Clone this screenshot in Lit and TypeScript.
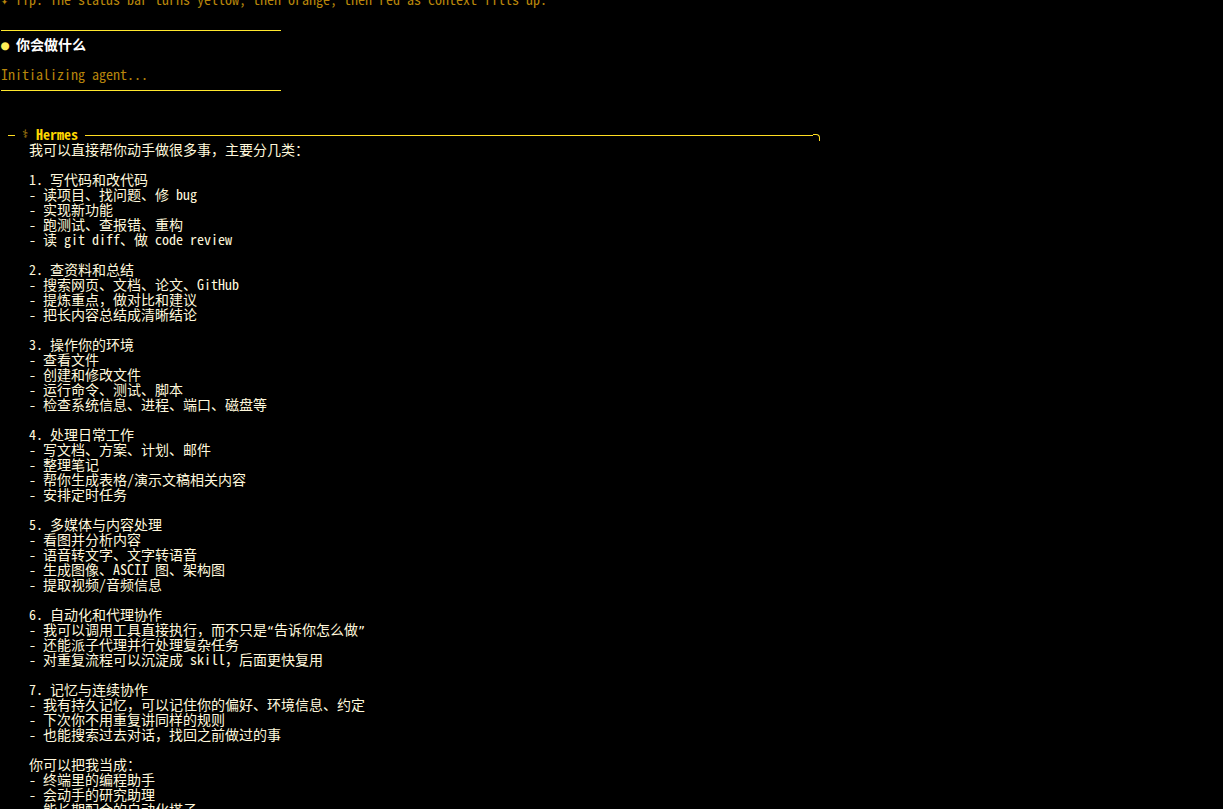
import { LitElement, html, css } from "lit";
import { customElement } from "lit/decorators.js";

const BODY = `我可以直接帮你动手做很多事，主要分几类：

1. 写代码和改代码
- 读项目、找问题、修 bug
- 实现新功能
- 跑测试、查报错、重构
- 读 git diff、做 code review

2. 查资料和总结
- 搜索网页、文档、论文、GitHub
- 提炼重点，做对比和建议
- 把长内容总结成清晰结论

3. 操作你的环境
- 查看文件
- 创建和修改文件
- 运行命令、测试、脚本
- 检查系统信息、进程、端口、磁盘等

4. 处理日常工作
- 写文档、方案、计划、邮件
- 整理笔记
- 帮你生成表格/演示文稿相关内容
- 安排定时任务

5. 多媒体与内容处理
- 看图并分析内容
- 语音转文字、文字转语音
- 生成图像、ASCII 图、架构图
- 提取视频/音频信息

6. 自动化和代理协作
- 我可以调用工具直接执行，而不只是“告诉你怎么做”
- 还能派子代理并行处理复杂任务
- 对重复流程可以沉淀成 skill，后面更快复用

7. 记忆与连续协作
- 我有持久记忆，可以记住你的偏好、环境信息、约定
- 下次你不用重复讲同样的规则
- 也能搜索过去对话，找回之前做过的事

你可以把我当成：
- 终端里的编程助手
- 会动手的研究助理
- 能长期配合的自动化搭子`.split("\n");

function runs(text: string) {
  return text
    .split(/([“”])/)
    .filter((s) => s.length > 0)
    .map((s) => (/^[“”]$/.test(s) ? html`<span class="sym">${s}</span>` : s));
}

@customElement("app-root")
export class AppRoot extends LitElement {
  static styles = css`
    :host {
      display: block;
      height: 809px;
      overflow: hidden;
      background: #000;
      color: #fff8dc;
      font-family: "Noto Sans Mono CJK SC", "DejaVu Sans Mono", monospace;
      font-size: 14px;
    }
    .screen {
      display: flex;
      flex-direction: column;
      margin-top: -8px;
    }
    .row {
      height: 15px;
      line-height: 15px;
      padding-left: 1px;
      white-space: pre;
    }
    .body {
      padding-left: 29px;
    }
    .head {
      display: flex;
      align-items: flex-start;
    }
    .sym {
      font-family: "DejaVu Sans Mono", monospace;
      font-size: 11.63px;
    }
    .cell {
      display: inline-block;
      width: 14px;
    }
    .dim {
      color: #b8860b;
    }
    .dot {
      color: #ffee58;
      font-size: 13.5px;
    }
    .title {
      font-weight: 700;
      color: #fff;
      margin-left: 1px;
    }
    .gold {
      color: #ffd700;
    }
    .bold {
      font-weight: 700;
    }
    .bronze {
      color: #d4a017;
      font-weight: 700;
    }
    .rule {
      display: block;
      width: 280px;
      height: 1px;
      margin-top: 8px;
      background: #ffe82e;
    }
    .dash {
      width: 7px;
      height: 1px;
      margin: 8px 7px 0 7px;
      background: #ffdd22;
    }
    .long {
      width: 728px;
      height: 1px;
      margin-top: 8px;
      background: #ffdd22;
    }
    .corner {
      width: 6px;
      height: 6px;
      margin-top: 7px;
      box-sizing: content-box;
      border-top: 1px solid #ffdd22;
      border-right: 1px solid #ffdd22;
      border-top-right-radius: 4px;
    }
  `;

  render() {
    return html`<div class="screen">
      <div class="row dim"><span class="sym cell">✦</span>Tip: The status bar turns yellow, then orange, then red as context fills up.</div>
      <div class="row"></div>
      <div class="row"><div class="rule"></div></div>
      <div class="row"><span class="sym cell dot">●</span><span class="title">你会做什么</span></div>
      <div class="row"></div>
      <div class="row dim">Initializing agent...</div>
      <div class="row"><div class="rule"></div></div>
      <div class="row"></div>
      <div class="row"></div>
      <div class="row head gold">
        <div class="dash"></div>
        <span class="sym cell bronze">⚕</span>
        <span class="bold">Hermes </span>
        <div class="long"></div>
        <div class="corner"></div>
      </div>
      ${BODY.map((l) => html`<div class="row body">${runs(l)}</div>`)}
    </div>`;
  }
}
